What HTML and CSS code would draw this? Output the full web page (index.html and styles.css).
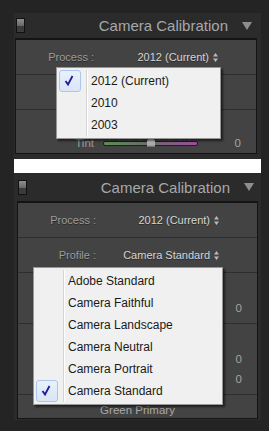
FILE: index.html
```html
<!DOCTYPE html>
<html lang="en">
  <head>
    <meta charset="UTF-8" />
    <meta name="viewport" content="width=device-width, initial-scale=1.0" />
    <title>Camera Calibration</title>
    <link rel="stylesheet" href="styles.css">
  </head>
  <body>
    <div id="all">
      <!-- 上面的面板 (Process 選單) -->
      <div class="panel top_panel">
        <div class="head">
          <div class="switch"></div>
          <div class="title">Camera Calibration</div>
          <svg class="head_arrow" width="10" height="8" viewBox="0 0 10 8"><path d="M0 0H10L5 8Z" fill="#8e8e8e"/></svg>
        </div>

        <div class="body">
          <div class="select_row">
            <span class="label">Process :</span>
            <span class="value">2012 (Current)
              <svg class="updown" width="5" height="9" viewBox="0 0 5 9"><path d="M2.5 0L5 3.5H0ZM0 5.5H5L2.5 9Z" fill="#b8b8b8"/></svg>
            </span>
          </div>
          <!-- 被選單蓋住的一列 -->
          <div class="select_row">
            <span class="label">Profile :</span>
            <span class="value"></span>
          </div>
          <div class="group">
            <div class="group_title"></div>
            <div class="slider_row">
              <span class="label">Tint</span>
              <div class="track"><div class="thumb" style="left: 43px"></div></div>
              <span class="num">0</span>
            </div>
          </div>
        </div>

        <!-- 下拉選單 -->
        <div class="menu menu_process">
          <div class="item">
            <div class="check on">
              <svg width="20" height="20" viewBox="0 0 20 20"><path d="M5.5 10L8 13.5L12.5 5" fill="none" stroke="#1b1ba0" stroke-width="1.8"/></svg>
            </div>
            <div class="text">2012 (Current)</div>
          </div>
          <div class="item">
            <div class="check"></div>
            <div class="text">2010</div>
          </div>
          <div class="item">
            <div class="check"></div>
            <div class="text">2003</div>
          </div>
        </div>
      </div>

      <!-- 白色分隔 -->
      <div class="cut"></div>

      <!-- 下面的面板 (Profile 選單) -->
      <div class="panel bottom_panel">
        <div class="head">
          <div class="switch"></div>
          <div class="title">Camera Calibration</div>
          <svg class="head_arrow" width="10" height="8" viewBox="0 0 10 8"><path d="M0 0H10L5 8Z" fill="#8e8e8e"/></svg>
        </div>

        <div class="body">
          <div class="select_row">
            <span class="label">Process :</span>
            <span class="value">2012 (Current)
              <svg class="updown" width="5" height="9" viewBox="0 0 5 9"><path d="M2.5 0L5 3.5H0ZM0 5.5H5L2.5 9Z" fill="#b8b8b8"/></svg>
            </span>
          </div>
          <div class="select_row">
            <span class="label">Profile :</span>
            <span class="value">Camera Standard
              <svg class="updown" width="5" height="9" viewBox="0 0 5 9"><path d="M2.5 0L5 3.5H0ZM0 5.5H5L2.5 9Z" fill="#b8b8b8"/></svg>
            </span>
          </div>
          <!-- 下面三組的標籤都被選單蓋住 -->
          <div class="group">
            <div class="group_title"></div>
            <div class="slider_row">
              <span class="label"></span>
              <div class="track"></div>
              <span class="num">0</span>
            </div>
          </div>
          <div class="group">
            <div class="group_title"></div>
            <div class="slider_row">
              <span class="label"></span>
              <div class="track"></div>
              <span class="num">0</span>
            </div>
            <div class="slider_row">
              <span class="label"></span>
              <div class="track"></div>
              <span class="num">0</span>
            </div>
          </div>
          <div class="group">
            <div class="group_title">Green Primary</div>
          </div>
        </div>

        <!-- 下拉選單 -->
        <div class="menu menu_profile">
          <div class="item">
            <div class="check"></div>
            <div class="text">Adobe Standard</div>
          </div>
          <div class="item">
            <div class="check"></div>
            <div class="text">Camera Faithful</div>
          </div>
          <div class="item">
            <div class="check"></div>
            <div class="text">Camera Landscape</div>
          </div>
          <div class="item">
            <div class="check"></div>
            <div class="text">Camera Neutral</div>
          </div>
          <div class="item">
            <div class="check"></div>
            <div class="text">Camera Portrait</div>
          </div>
          <div class="item">
            <div class="check on">
              <svg width="20" height="20" viewBox="0 0 20 20"><path d="M5.5 10L8 13.5L12.5 5" fill="none" stroke="#1b1ba0" stroke-width="1.8"/></svg>
            </div>
            <div class="text">Camera Standard</div>
          </div>
        </div>
      </div>
    </div>
  </body>
</html>
```

FILE: styles.css
```css
*,
*::before,
*::after {
  margin: 0;
  padding: 0;
  box-sizing: border-box;
}

body {
  background: #242424;
  font-family: "Liberation Sans", Arial, sans-serif;
}

/* ---------------------------------------- 整個 --------------------------------------------- */
#all {
  padding: 13px 0 0 14px;
  width: 269px;
}

/* ---------------------------------------- 面板 --------------------------------------------- */
.panel {
  position: relative;
  width: 247px;
  background: #2b2b2b;
}

/* 上面的面板只看得到一半 */
.top_panel {
  height: 146px;
  overflow: hidden;
}

.bottom_panel {
  padding-bottom: 1px;
}

/* ---------------------------------------- 標題列 ------------------------------------------- */
.head {
  display: flex;
  align-items: center;
}

.top_panel .head {
  height: 25px;
  padding: 0 9px 0 2px;
}

.bottom_panel .head {
  height: 28px;
  padding: 0 7px 0 4px;
}

/* 開關 */
.switch {
  width: 9px;
  height: 15px;
  border: 1px solid #111;
  background: linear-gradient(#8e8e8e, #6a6a6a 50%, #3b3b3b 50%, #3b3b3b);
}

.title {
  flex: 1;
  text-align: right;
  margin-right: 14px;

  font-size: 15px;
  color: #a6a8aa;
}

/* ---------------------------------------- 內框 --------------------------------------------- */
.body {
  background: #434343;
  border: 1px solid #141414;
  border-top-width: 2px;
}

.top_panel .body {
  margin: 0 4px 0 1px;
}

.bottom_panel .body {
  margin: 0 3px;
}

.label {
  text-align: right;
  color: #9c9c9c;
}

/* ------------------------------------- 下拉列 (Process / Profile) -------------------------------- */
.select_row {
  display: grid;
  grid-template-columns: 78px 1fr;
  align-items: center;

  height: 35px;
  padding-right: 38px;
  border-bottom: 1px solid #2e2e2e;

  font-size: 11px;
  text-shadow: 0 1px 0 #2a2a2a;
}

.value {
  display: flex;
  align-items: center;
  justify-content: flex-end;
  gap: 4px;

  color: #d6d6d6;
}

/* ---------------------------------------- 分組 --------------------------------------------- */
.group {
  padding: 8px 0 5px;
  border-bottom: 1px solid #2e2e2e;
}

.group:last-child {
  padding: 7px 0 0;
  border-bottom: none;
}

.group_title {
  height: 17px;
  text-align: center;
  line-height: 17px;
  font-size: 11.5px;
  color: #a8a8a8;
}

.group:last-child .group_title {
  height: 16px;
  line-height: 16px;
}

/* ---------------------------------------- 滑桿 --------------------------------------------- */
.slider_row {
  display: grid;
  grid-template-columns: 78px 95px 1fr;
  column-gap: 9px;
  align-items: center;

  height: 20px;
  padding-right: 15px;

  font-size: 11.5px;
}

.num {
  text-align: right;
  color: #a4a4a4;
}

.track {
  position: relative;
  height: 5px;
  border: 1px solid #1f1f1f;
  border-radius: 2px;
  background: linear-gradient(90deg, #5a9150, #6c6c6c 50%, #a04ca2);
}

/* 刻度 */
.track::before {
  content: "";
  position: absolute;
  top: -4px;
  left: 5px;
  right: 5px;
  height: 2px;
  background: repeating-linear-gradient(90deg, #6e6e6e 0 1px, transparent 1px 10px);
}

.thumb {
  position: absolute;
  top: -5px;
  width: 8px;
  height: 10px;
  background: linear-gradient(#d0d0d0, #9a9a9a);
  clip-path: polygon(50% 0, 100% 40%, 100% 100%, 0 100%, 0 40%);
}

/* ---------------------------------------- 白色分隔 ----------------------------------------- */
.cut {
  width: 247px;
  height: 14px;
  background: #ffffff;
}

/* ---------------------------------------- 下拉選單 ----------------------------------------- */
.menu {
  position: absolute;
  padding: 2px;

  background: #f0f0f0;
  border: 1px solid #979797;
  box-shadow: 2px 2px 2px rgba(0, 0, 0, 0.55);

  font-size: 12px;
  color: #1a1a1a;
}

.menu_process {
  left: 42px;
  top: 54px;
  width: 165px;
}

.menu_profile {
  left: 19px;
  top: 94px;
  width: 190px;
}

.item {
  display: flex;
  height: 22px;
  line-height: 22px;
}

.check {
  width: 22px;
  height: 22px;
}

.check.on {
  border: 1px solid #a9c7ec;
  border-radius: 3px;
  background: linear-gradient(#e9f1fb, #d9e6f7);
}

.check svg {
  display: block;
}

.text {
  flex: 1;
  margin-left: 5px;
  padding-left: 4px;
  border-left: 1px solid #d4d4d4;
  box-shadow: inset 1px 0 0 #ffffff;
}
```
